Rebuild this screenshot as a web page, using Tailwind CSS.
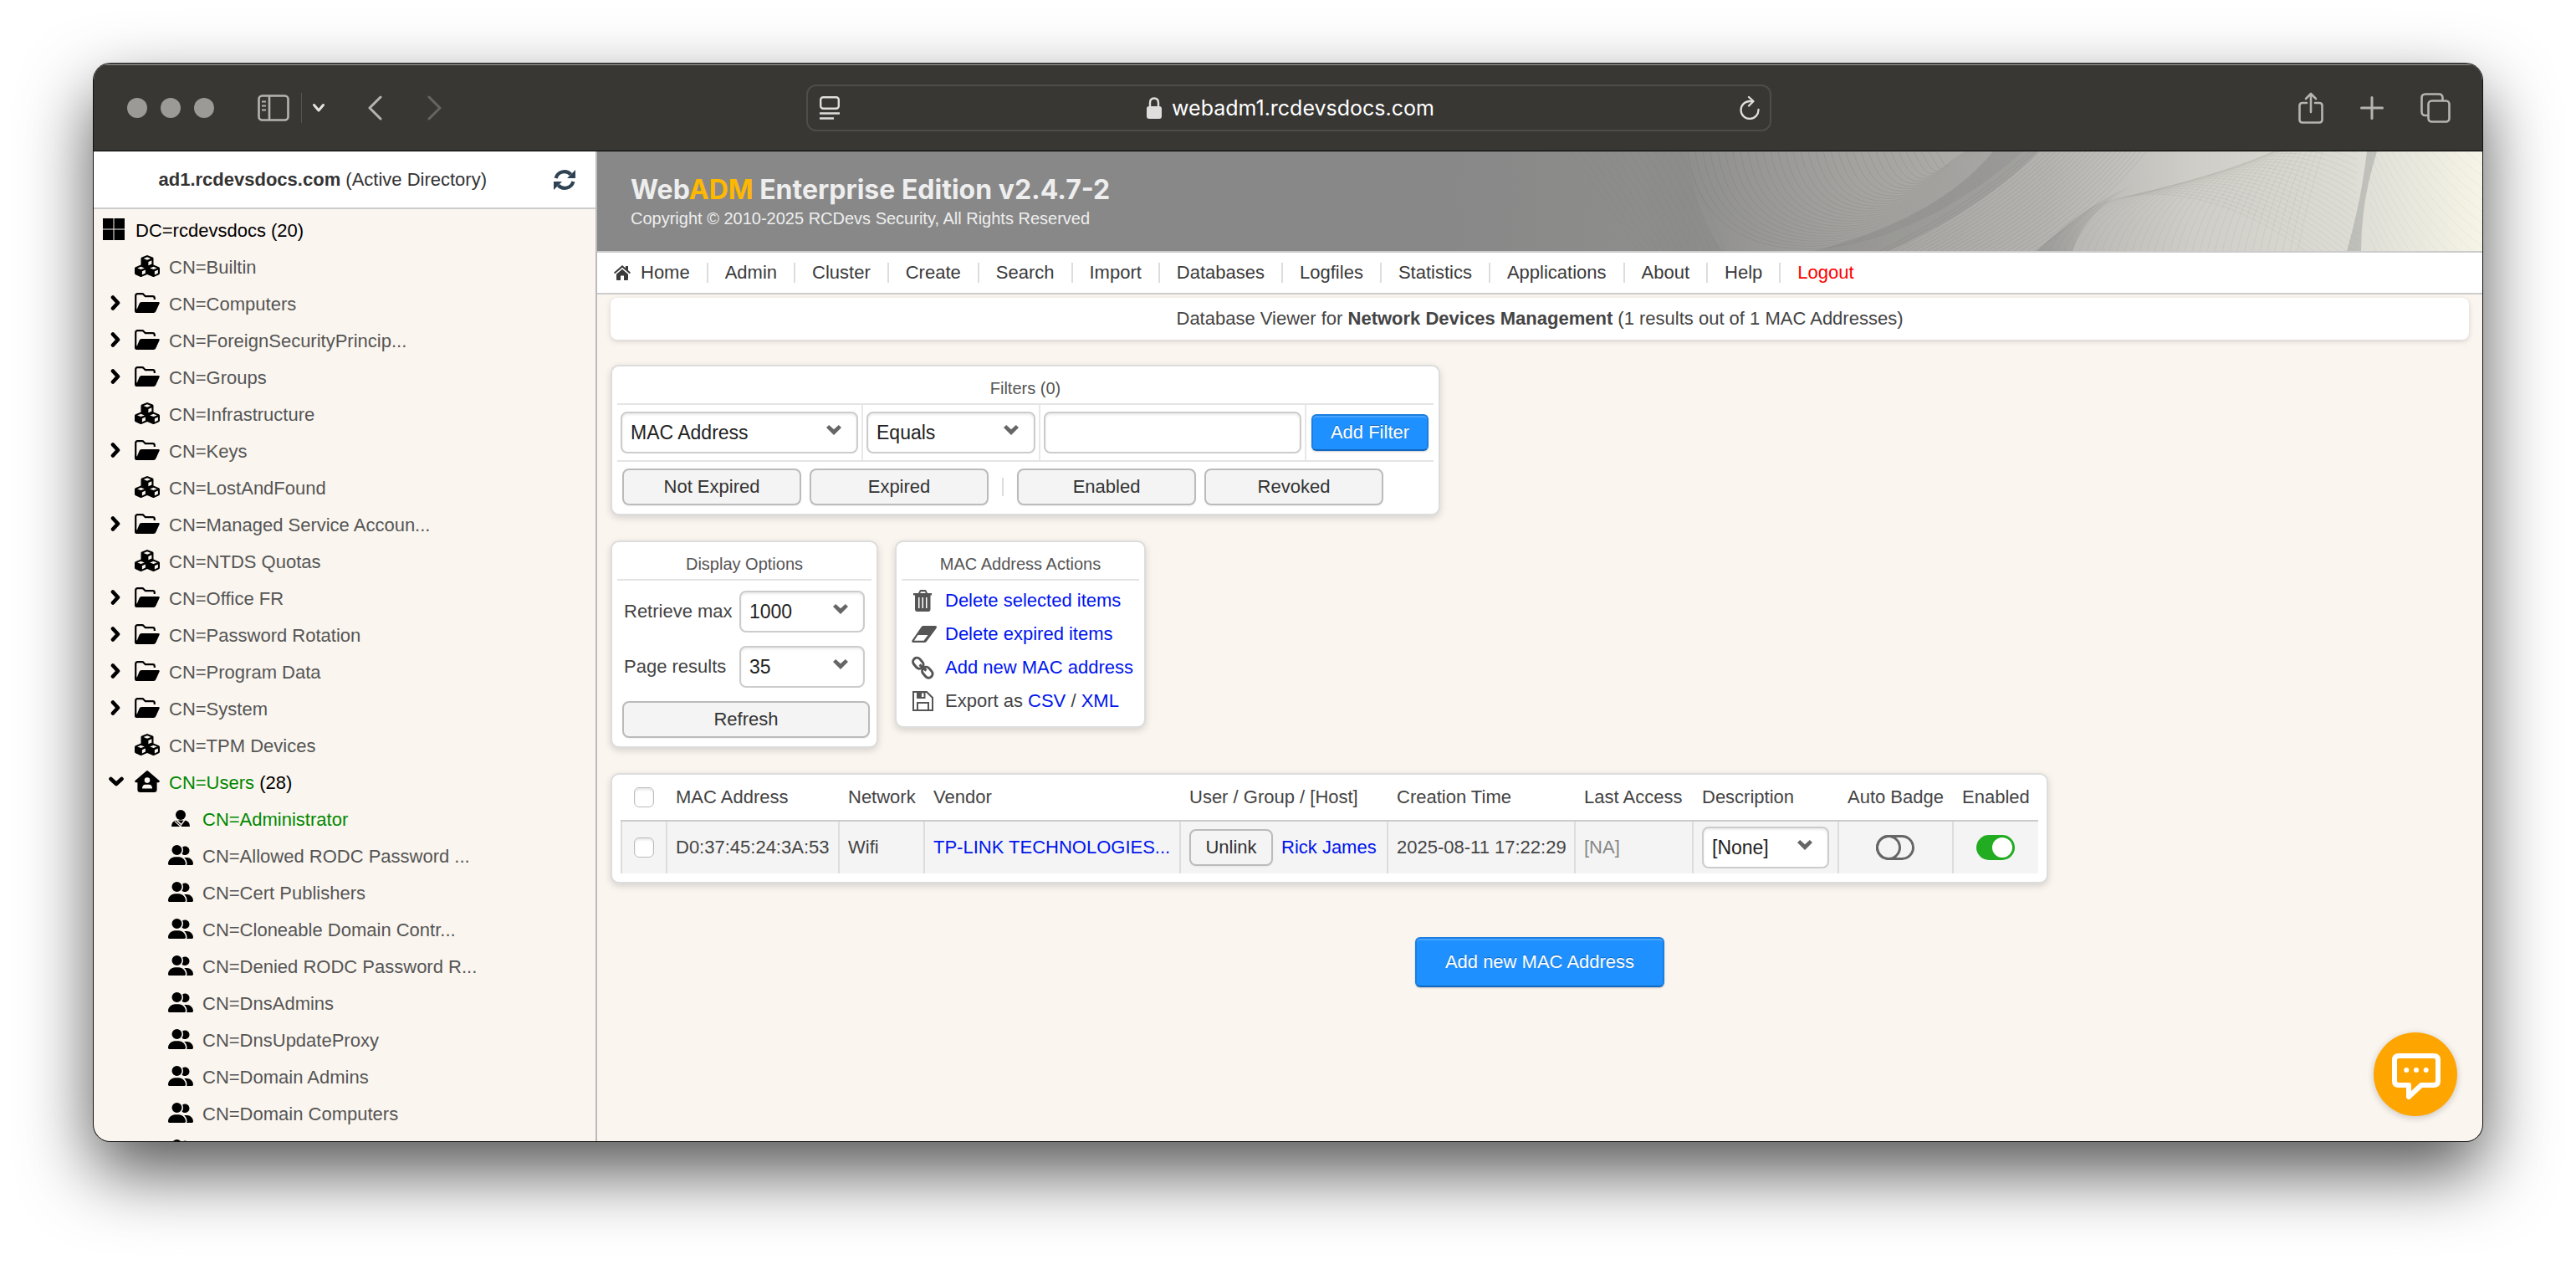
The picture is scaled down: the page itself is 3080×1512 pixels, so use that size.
<!DOCTYPE html>
<html lang="en">
<head>
  <meta charset="UTF-8" />
  <meta name="viewport" content="width=device-width, initial-scale=1.0"/>
  <title>WebADM - Network Devices Management</title>
  <script src="https://cdn.jsdelivr.net/npm/@tailwindcss/browser@4"></script>
</head>
<body class="bg-white font-['Liberation_Sans',Arial,sans-serif] text-[22px] leading-7 text-[#444]">

  <!-- Icons -->
  <svg class="hidden">
    <symbol id="i-group" viewBox="0 0 640 512"><path d="M96 128a128 128 0 1 1 256 0A128 128 0 1 1 96 128zM0 482.3C0 383.8 79.8 304 178.3 304l91.4 0C368.2 304 448 383.8 448 482.3c0 16.400-13.300 29.700-29.700 29.700L29.700 512C13.300 512 0 498.700 0 482.300zM609.300 512l-137.800 0c5.400-9.400 8.600-20.300 8.600-32l0-8c0-60.700-27.100-115.200-69.800-151.800c2.400-.1 4.700-.2 7.100-.2l61.400 0C567.800 320 640 392.200 640 481.300c0 17-13.800 30.700-30.700 30.700zM432 256c-31 0-59-12.600-79.300-32.900C372.400 196.500 384 163.600 384 128c0-26.800-6.600-52.100-18.300-74.300C384.300 40.100 407.200 32 432 32c61.900 0 112 50.100 112 112s-50.100 112-112 112z"/></symbol>
    <symbol id="i-folder" viewBox="0 0 30 24">
      <path d="M1.200 21V3.500Q1.200 1.200 3.500 1.200H9Q10 1.200 10.700 2L12.800 4.200H21.500Q23.800 4.200 23.800 6.500V8" fill="none" stroke="currentColor" stroke-width="2.200"/>
      <path d="M8.200 11H28.500Q30.300 11 29.600 12.700L25.400 22Q24.600 24 22.600 24H2.600Q1 24 1.700 22.200L5.600 12.700Q6.300 11 8.200 11Z"/>
      <path d="M0 18V22Q0 24 2.600 24L3.500 20Z"/>
    </symbol>
    <symbol id="i-cubes" viewBox="0 0 30 26">
      <path d="M15 0L21.500 2.600Q22.500 3 22.500 4.100V11.600L29 14.200Q30 14.700 30 15.800V21.600Q30 22.700 29 23.200L23.500 25.800Q22.500 26.200 21.500 25.800L15 22.900L8.500 25.800Q7.500 26.200 6.500 25.800L1 23.200Q0 22.700 0 21.600V15.800Q0 14.700 1 14.200L7.500 11.600V4.100Q7.500 3 8.500 2.600Z"/>
      <g fill="#faf5ef">
        <path d="M15 2.300L19.300 4L15 5.700L10.700 4Z"/><path d="M16.400 7.900L20.400 6.200V10.600L16.400 12.300Z"/>
        <path d="M7.500 13.700L11.800 15.400L7.500 17.100L3.200 15.400Z"/><path d="M8.900 19.300L12.900 17.600V21.600L8.900 23.400Z"/>
        <path d="M22.500 13.700L26.800 15.400L22.500 17.100L18.200 15.400Z"/><path d="M23.900 19.300L27.900 17.600V21.600L23.900 23.400Z"/>
      </g>
    </symbol>
    <symbol id="i-house-user" viewBox="0 0 30 26">
      <path d="M14 .5Q15 -.3 16 .5L29.400 12Q30.600 13.600 28.600 14.200H26.600V22.800Q26.600 26 23.400 26H6.600Q3.400 26 3.400 22.800V14.200H1.400Q-.6 13.600 .6 12Z"/>
      <circle cx="15" cy="11.600" r="3.300" fill="#faf5ef"/><path d="M9 21.600Q9 16.800 13 16.800H17Q21 16.800 21 21.600Z" fill="#faf5ef"/>
    </symbol>
    <symbol id="i-admin" viewBox="0 0 22 20">
      <circle cx="11" cy="6" r="6"/><path d="M0 20Q0 14 5.500 12.600L11 18L9.800 20ZM22 20Q22 14 16.500 12.600L11.500 19L12 20ZM7.500 12.500H14.500L11.800 16.500Z"/>
      <path d="M4 13.500L11 20" stroke="#faf5ef" stroke-width="1.200"/>
    </symbol>
    <symbol id="i-win" viewBox="0 0 26 26"><path d="M0 0H12.500V12.500H0ZM13.500 0H26V12.500H13.500ZM0 13.500H12.500V26H0ZM13.500 13.500H26V26H13.500Z"/></symbol>
    <symbol id="i-right" viewBox="0 0 16 18"><path d="M5 2.500L11 9L5 15.500" fill="none" stroke="currentColor" stroke-width="4.600" stroke-linejoin="round" stroke-linecap="round"/></symbol>
    <symbol id="i-down" viewBox="0 0 18 18"><path d="M2.500 6L9 12L15.500 6" fill="none" stroke="currentColor" stroke-width="4.600" stroke-linejoin="round" stroke-linecap="round"/></symbol>
    <symbol id="i-arrow" viewBox="0 0 18 12"><path d="M0 3L3.200 0L9 5.200L14.800 0L18 3L9 12Z"/></symbol>
  </svg>

  <div class="flex h-screen min-h-[700px] px-28 pt-19 pb-37">
    <div class="relative flex min-w-0 flex-1 flex-col overflow-hidden rounded-[20px] bg-[#faf5ef] shadow-[0_0_0_1px_#111,0_36px_84px_rgba(0,0,0,0.68)]">

      <!-- Browser toolbar -->
      <div class="flex h-[105px] shrink-0 items-center border-t-2 border-b border-t-[#7b7a76] border-b-black bg-[#383734] pr-[38px] pl-10 text-[#b5b4b1]">
        <div class="flex flex-1 items-center">
          <div class="flex gap-4">
            <span class="size-6 rounded-full bg-[#9b9a97]"></span>
            <span class="size-6 rounded-full bg-[#9b9a97]"></span>
            <span class="size-6 rounded-full bg-[#9b9a97]"></span>
          </div>
          <button class="ml-13" aria-label="Sidebar"><svg class="h-8 w-[38px]" viewBox="0 0 38 32" fill="none" stroke="currentColor" stroke-width="2.600"><rect x="1.500" y="1.500" width="35" height="29" rx="4"/><path d="M14 2V30"/><path d="M5 8.500H10M5 13.500H10M5 18.500H10" stroke-width="2"/></svg></button>
          <span class="ml-[14px] h-9 w-px bg-[#55544f]"></span>
          <button class="ml-3" aria-label="Tab groups"><svg class="h-3 w-4" viewBox="0 0 16 12" fill="none" stroke="#e4e3e0" stroke-width="3" stroke-linecap="round" stroke-linejoin="round"><path d="M2.500 2.500L8 9L13.500 2.500"/></svg></button>
          <button class="ml-[50px]" aria-label="Back"><svg class="h-[30px] w-[18px]" viewBox="0 0 18 30" fill="none" stroke="currentColor" stroke-width="3" stroke-linecap="round" stroke-linejoin="round"><path d="M16 2L3 15L16 28"/></svg></button>
          <button class="ml-[54px] text-[#666561]" aria-label="Forward"><svg class="h-[30px] w-[18px]" viewBox="0 0 18 30" fill="none" stroke="currentColor" stroke-width="3" stroke-linecap="round" stroke-linejoin="round"><path d="M2 2L15 15L2 28"/></svg></button>
        </div>
        <div class="flex h-14 w-5/12 max-w-[1154px] items-center justify-between rounded-xl border-2 border-[#4e4d4a] px-3 text-[#dfdedc]">
          <svg class="h-7 w-7" viewBox="0 0 28 28" fill="none" stroke="currentColor" stroke-width="2.400"><rect x="3.200" y="1.200" width="21.600" height="13.600" rx="3"/><path d="M2 20.500H26M2 26.500H19"/></svg>
          <div class="flex items-center gap-3 font-[Inter,'Liberation_Sans',sans-serif] text-[25px] text-white">
            <svg class="h-[26px] w-[18px]" viewBox="0 0 18 26"><path d="M4 12V7Q4 1.500 9 1.500T14 7V12" fill="none" stroke="#dfdedc" stroke-width="2.400"/><rect y="11" width="18" height="15" rx="3" fill="#dfdedc"/></svg>
            webadm1.rcdevsdocs.com
          </div>
          <button aria-label="Reload"><svg class="h-7 w-6" viewBox="0 0 24 28" fill="none" stroke="currentColor" stroke-width="2.300" stroke-linecap="round" stroke-linejoin="round"><path d="M22.500 16A10.500 10.500 0 1 1 12 6H16"/><path d="M11 1L16.500 6L11 11.500"/></svg></button>
        </div>
        <div class="flex flex-1 items-center justify-end gap-[44px]">
          <button aria-label="Share"><svg class="h-[38px] w-[30px]" viewBox="0 0 30 38" fill="none" stroke="currentColor" stroke-width="2.600" stroke-linecap="round" stroke-linejoin="round"><path d="M10 13H5Q1.500 13 1.500 16V33Q1.500 36.500 5 36.500H25Q28.500 36.500 28.500 33V16Q28.500 13 25 13H20"/><path d="M15 24V2M9 8L15 2L21 8"/></svg></button>
          <button aria-label="New tab"><svg class="size-7" viewBox="0 0 28 28" fill="none" stroke="currentColor" stroke-width="3" stroke-linecap="round"><path d="M14 1.500V26.500M1.500 14H26.500"/></svg></button>
          <button aria-label="Tabs"><svg class="size-9" viewBox="0 0 36 36" fill="none" stroke="currentColor" stroke-width="2.600"><rect x="9.500" y="9.500" width="25" height="25" rx="4"/><path d="M9.500 27H6Q1.500 27 1.500 22.500V6Q1.500 1.500 6 1.500H22Q26.500 1.500 26.500 6V9.500"/></svg></button>
        </div>
      </div>

      <div class="flex min-h-0 flex-1">

        <!-- LDAP tree -->
        <aside class="flex w-[602px] shrink-0 flex-col overflow-hidden border-r-2 border-[#bbb]">
          <div class="flex h-[69px] shrink-0 items-center justify-end gap-20 border-b-2 border-[#ccc] bg-white pr-6 text-[#333]">
            <p><b>ad1.rcdevsdocs.com</b> (Active Directory)</p>
            <button aria-label="Refresh tree"><svg class="size-[26px]" viewBox="0 0 26 26" fill="none" stroke="#2f4254" stroke-width="4.200"><path d="M2.600 11A10.600 10.600 0 0 1 20.500 6.500"/><path d="M23.400 15A10.600 10.600 0 0 1 5.500 19.500"/><path d="M26 1V11H16ZM0 25V15H10Z" fill="#2f4254" stroke="none"/></svg></button>
          </div>
          <ul id="tree" class="pt-1"></ul>
        </aside>

        <main class="flex min-w-0 flex-1 flex-col">

          <!-- Banner -->
          <header class="flex h-[121px] shrink-0 items-stretch justify-between overflow-hidden border-b-2 border-[#ccc] bg-[#888] pl-10 text-[#eee]">
            <div class="pt-[30px] whitespace-nowrap">
              <h1 class="font-[Inter,'Liberation_Sans',sans-serif] text-[32px] leading-8 font-bold">Web<span class="text-[#ffb800]">ADM</span> Enterprise Edition v2.4.7-2</h1>
              <p class="pt-1 text-[20px] leading-7">Copyright © 2010-2025 RCDevs Security, All Rights Reserved</p>
            </div>
            <svg class="h-[119px] w-[1240px] shrink-0" viewBox="0 0 1240 119" preserveAspectRatio="none">
              <defs>
                <linearGradient id="sky">
                  <stop offset="0" stop-color="#888"/><stop offset=".23" stop-color="#8e8e8d"/><stop offset=".4" stop-color="#a4a3a0"/>
                  <stop offset=".58" stop-color="#b4b3b0"/><stop offset=".72" stop-color="#cecdc7"/><stop offset=".87" stop-color="#dcdcd5"/><stop offset="1" stop-color="#f6f4e6"/>
                </linearGradient>
                <linearGradient id="fold"><stop offset="0" stop-color="#777" stop-opacity="0"/><stop offset="1" stop-color="#777" stop-opacity=".35"/></linearGradient>
                <linearGradient id="lift"><stop offset="0" stop-color="#777" stop-opacity=".4"/><stop offset="1" stop-color="#777" stop-opacity="0"/></linearGradient>
              </defs>
              <rect width="1240" height="119" fill="url(#sky)"/>
              <path d="M230 0H288Q300 80 332 119H230Z" fill="url(#fold)" opacity=".5"/>
              <path d="M655 0H710Q640 70 530 119H440Q590 80 655 0Z" fill="#7c7b79" opacity=".3"/>
              <path d="M831 36Q770 60 707 119H750Q765 70 831 36Z" fill="url(#lift)"/>
              <path d="M1102 0H1114Q1095 60 1095 119H1078Q1095 60 1102 0Z" fill="#888" opacity=".35"/>
              <g id="waves" fill="none" stroke="#6b6b69" stroke-width="1"></g>
            </svg>
          </header>

          <!-- Menu -->
          <nav class="flex h-[50px] shrink-0 items-center border-b-2 border-[#ccc] bg-white pl-5 text-[#3a3a3a]">
            <svg class="h-[18px] w-5" viewBox="0 0 20 18" fill="#3a3a3a"><path d="M10 4.800L17 10.800V17Q17 18 16 18H12V12.500H8V18H4Q3 18 3 17V10.800Z"/><path d="M10 0L14 3.500V1H17V6L20 8.800L18.800 10.200L10 2.800L1.200 10.200L0 8.800Z"/></svg>
            <ul class="-ml-2 flex leading-6 [&>li]:border-r-2 [&>li]:border-[#ddd] [&>li]:px-5 [&>li:last-child]:border-r-0">
              <li><a href="#">Home</a></li>
              <li><a href="#">Admin</a></li>
              <li><a href="#">Cluster</a></li>
              <li><a href="#">Create</a></li>
              <li><a href="#">Search</a></li>
              <li><a href="#">Import</a></li>
              <li><a href="#">Databases</a></li>
              <li><a href="#">Logfiles</a></li>
              <li><a href="#">Statistics</a></li>
              <li><a href="#">Applications</a></li>
              <li><a href="#">About</a></li>
              <li><a href="#">Help</a></li>
              <li><a href="#" class="text-[#f00]">Logout</a></li>
            </ul>
          </nav>

          <div class="flex flex-col items-start gap-[30px] px-4 pt-1">
            <div class="w-full rounded-lg bg-white py-[11px] text-center shadow-[0_2px_6px_rgba(0,0,0,0.15)]">Database Viewer for <b>Network Devices Management</b> (1 results out of 1 MAC Addresses)</div>

            <!-- Filters -->
            <section class="rounded-[10px] border-2 border-[#ddd] bg-white px-1.5 pb-2.5 shadow-[0_3px_8px_rgba(0,0,0,0.15)]">
              <h2 class="border-b-2 border-[#e4e4e4] pt-3 pb-1 text-center text-[20px] text-[#555]">Filters (0)</h2>
              <div class="flex h-[68px] border-b-2 border-[#e4e4e4]">
                <div class="flex items-center border-r-2 border-[#e8e8e8] px-1">
                  <label class="relative block">
                    <select aria-label="Field" class="h-[50px] w-[284px] appearance-none rounded-lg border-2 border-[#ccc] bg-white pl-2.5 text-[23px] text-[#222] shadow-[inset_0_2px_3px_rgba(0,0,0,0.08)]"><option>MAC Address</option></select>
                    <svg class="pointer-events-none absolute top-4 right-5 h-3 w-[18px] fill-[#666]"><use href="#i-arrow"/></svg>
                  </label>
                </div>
                <div class="flex items-center border-r-2 border-[#e8e8e8] px-1">
                  <label class="relative block">
                    <select aria-label="Operator" class="h-[50px] w-[202px] appearance-none rounded-lg border-2 border-[#ccc] bg-white pl-2.5 text-[23px] text-[#222] shadow-[inset_0_2px_3px_rgba(0,0,0,0.08)]"><option>Equals</option></select>
                    <svg class="pointer-events-none absolute top-4 right-5 h-3 w-[18px] fill-[#666]"><use href="#i-arrow"/></svg>
                  </label>
                </div>
                <div class="flex items-center border-r-2 border-[#e8e8e8] px-1">
                  <input type="text" aria-label="Value" class="h-[50px] w-[308px] rounded-lg border-2 border-[#ccc] px-2.5 shadow-[inset_0_2px_3px_rgba(0,0,0,0.08)]">
                </div>
                <div class="flex items-center px-1.5">
                  <button class="h-11 w-[140px] rounded-md border-2 border-[#1a7fe0] border-b-[#1068c0] bg-[#1e90ff] text-white shadow-[inset_0_2px_0_#48a5ff,0_1px_2px_rgba(0,0,0,0.2)] [text-shadow:0_-1px_0_rgba(0,0,0,0.3)]">Add Filter</button>
                </div>
              </div>
              <div class="flex items-center gap-2.5 px-1.5 pt-2">
                <button class="h-11 w-[214px] rounded-lg border-2 border-[#bbb] bg-[#f4f4f4] text-[#333] shadow-xs">Not Expired</button>
                <button class="h-11 w-[214px] rounded-lg border-2 border-[#bbb] bg-[#f4f4f4] text-[#333] shadow-xs">Expired</button>
                <span class="mx-1.5 h-[22px] w-0.5 bg-[#ddd]"></span>
                <button class="h-11 w-[214px] rounded-lg border-2 border-[#bbb] bg-[#f4f4f4] text-[#333] shadow-xs">Enabled</button>
                <button class="h-11 w-[214px] rounded-lg border-2 border-[#bbb] bg-[#f4f4f4] text-[#333] shadow-xs">Revoked</button>
              </div>
            </section>

            <div class="flex items-start gap-5">
              <!-- Display options -->
              <section class="w-[320px] rounded-[10px] border-2 border-[#ddd] bg-white px-1.5 pb-2.5 shadow-[0_3px_8px_rgba(0,0,0,0.15)]">
                <h2 class="border-b-2 border-[#e4e4e4] pt-3 pb-1 text-center text-[20px] text-[#555]">Display Options</h2>
                <div class="flex flex-col gap-4 pt-3 pr-0.5 pl-1.5">
                  <div class="flex items-center justify-between pr-1.5 pl-0.5">
                    <label for="max">Retrieve max</label>
                    <div class="relative">
                      <select id="max" class="block h-[50px] w-[150px] appearance-none rounded-lg border-2 border-[#ccc] bg-white pl-2.5 text-[23px] text-[#222] shadow-[inset_0_2px_3px_rgba(0,0,0,0.08)]"><option>1000</option></select>
                      <svg class="pointer-events-none absolute top-4 right-5 h-3 w-[18px] fill-[#666]"><use href="#i-arrow"/></svg>
                    </div>
                  </div>
                  <div class="flex items-center justify-between pr-1.5 pl-0.5">
                    <label for="page">Page results</label>
                    <div class="relative">
                      <select id="page" class="block h-[50px] w-[150px] appearance-none rounded-lg border-2 border-[#ccc] bg-white pl-2.5 text-[23px] text-[#222] shadow-[inset_0_2px_3px_rgba(0,0,0,0.08)]"><option>35</option></select>
                      <svg class="pointer-events-none absolute top-4 right-5 h-3 w-[18px] fill-[#666]"><use href="#i-arrow"/></svg>
                    </div>
                  </div>
                  <button class="h-11 rounded-lg border-2 border-[#bbb] bg-[#f4f4f4] text-[#333] shadow-xs">Refresh</button>
                </div>
              </section>

              <!-- Actions -->
              <section class="w-[300px] rounded-[10px] border-2 border-[#ddd] bg-white px-1.5 pb-2.5 shadow-[0_3px_8px_rgba(0,0,0,0.15)]">
                <h2 class="border-b-2 border-[#e4e4e4] pt-3 pb-1 text-center text-[20px] text-[#555]">MAC Address Actions</h2>
                <ul class="pt-1 pl-3 whitespace-nowrap [&>li]:flex [&>li]:h-10 [&>li]:items-center [&>li]:gap-2.5">
                  <li>
                    <svg class="h-[26px] w-[30px] fill-[#555]" viewBox="0 0 30 26"><path d="M2 4H8L9.500 1Q10 0 11 0H16Q17 0 17.500 1L19 4H24V6.500H2ZM11 2.200L10.200 4H16.800L16 2.200Z" fill-rule="evenodd"/><path fill-rule="evenodd" d="M4 6H22.500V23Q22.500 26 20 26H6.500Q4 26 4 23ZM8 9V22H9.500V9ZM12.500 9V22H14V9ZM17 9V22H18.500V9Z"/></svg>
                    <a href="#" class="text-[#0014ee]">Delete selected items</a>
                  </li>
                  <li>
                    <svg class="h-[22px] w-[30px] fill-[#555]" viewBox="0 0 30 22"><path fill-rule="evenodd" d="M13.500 1H28Q31 1 29.500 4L18 19.500Q17 21 15 21H2Q-.8 21 .8 18L11.500 2.500Q12.300 1 13.500 1ZM7.500 12L3 18.800H14.500L19.500 12Z"/></svg>
                    <a href="#" class="text-[#0014ee]">Delete expired items</a>
                  </li>
                  <li>
                    <svg class="h-[28px] w-[30px]" viewBox="0 0 30 28" fill="none" stroke="#555" stroke-width="3"><rect x="1" y="4" width="14" height="9.500" rx="4.700" transform="rotate(50 8 8.500)"/><rect x="12" y="15" width="14" height="9.500" rx="4.700" transform="rotate(50 19 19.500)"/><path d="M9.500 10.500L17.500 17.500"/></svg>
                    <a href="#" class="text-[#0014ee]">Add new MAC address</a>
                  </li>
                  <li>
                    <svg class="h-[24px] w-[30px]" viewBox="0 0 30 24" fill="none" stroke="#555" stroke-width="2"><path d="M2 1H18L25 8V23H2Z"/><path d="M7 23V14H20V23"/><path d="M6 1H16.500V9H6ZM12 2.500V7H14.500V2.500Z" fill="#555" fill-rule="evenodd" stroke="none"/></svg>
                    <span>Export as <a href="#" class="text-[#0014ee]">CSV</a> / <a href="#" class="text-[#0014ee]">XML</a></span>
                  </li>
                </ul>
              </section>
            </div>

            <!-- Results -->
            <section class="rounded-[10px] border-2 border-[#ddd] bg-white px-2.5 pb-2.5 shadow-[0_3px_8px_rgba(0,0,0,0.15)]">
              <table class="table-fixed border-separate border-spacing-0 text-left whitespace-nowrap">
                <colgroup>
                  <col class="w-[54px]"><col class="w-[206px]"><col class="w-[102px]"><col class="w-[306px]"><col class="w-[248px]"><col class="w-[224px]"><col class="w-[141px]"><col class="w-[174px]"><col class="w-[137px]"><col class="w-[103px]">
                </colgroup>
                <thead>
                  <tr class="h-14 [&>th]:border-b-2 [&>th]:border-[#ccc] [&>th]:p-0 [&>th]:pl-3 [&>th]:font-normal">
                    <th><input type="checkbox" aria-label="Select all" class="ml-1 block size-6 appearance-none rounded-md border border-[#bbb] bg-white shadow-[inset_0_2px_3px_rgba(0,0,0,0.1)]"></th>
                    <th>MAC Address</th>
                    <th>Network</th>
                    <th>Vendor</th>
                    <th>User / Group / [Host]</th>
                    <th>Creation Time</th>
                    <th>Last Access</th>
                    <th>Description</th>
                    <th>Auto Badge</th>
                    <th>Enabled</th>
                  </tr>
                </thead>
                <tbody>
                  <tr class="h-[62px] bg-[#f4f4f4] [&>td]:border-l-2 [&>td]:border-[#ddd] [&>td]:p-0 [&>td]:pl-2.5">
                    <td><input type="checkbox" aria-label="Select D0:37:45:24:3A:53" class="ml-1 block size-6 appearance-none rounded-md border border-[#bbb] bg-white shadow-[inset_0_2px_3px_rgba(0,0,0,0.1)]"></td>
                    <td>D0:37:45:24:3A:53</td>
                    <td>Wifi</td>
                    <td><a href="#" class="text-[#0014ee]">TP-LINK TECHNOLOGIES...</a></td>
                    <td>
                      <div class="flex items-center gap-2.5">
                        <button class="h-11 w-[100px] rounded-lg border-2 border-[#bbb] bg-[#f4f4f4] text-[#333] shadow-xs">Unlink</button>
                        <a href="#" class="text-[#0014ee]">Rick James</a>
                      </div>
                    </td>
                    <td>2025-08-11 17:22:29</td>
                    <td class="text-[#888]">[NA]</td>
                    <td>
                      <div class="relative w-[152px]">
                        <select aria-label="Description" class="block h-[50px] w-full appearance-none rounded-lg border-2 border-[#ccc] bg-white pl-2.5 text-[23px] text-[#222] shadow-[inset_0_2px_3px_rgba(0,0,0,0.08)]"><option>[None]</option></select>
                        <svg class="pointer-events-none absolute top-4 right-5 h-3 w-[18px] fill-[#666]"><use href="#i-arrow"/></svg>
                      </div>
                    </td>
                    <td class="pr-3!"><input type="checkbox" aria-label="Auto Badge" class="mx-auto block h-[30px] w-[46px] appearance-none rounded-full border-3 border-[#666] before:-mt-[3px] before:-ml-[3px] before:block before:size-[30px] before:rounded-full before:border-3 before:border-[#666] before:content-['']"></td>
                    <td class="pr-3!"><input type="checkbox" aria-label="Enabled" checked class="mx-auto block h-[30px] w-[46px] appearance-none rounded-full border-3 border-[#22ac22] bg-[#22ac22] before:ml-auto before:block before:size-6 before:rounded-full before:bg-white before:content-['']"></td>
                  </tr>
                </tbody>
              </table>
            </section>
          </div>

          <button class="mx-auto mt-16 h-15 w-[298px] shrink-0 rounded-md border-2 border-[#1a7fe0] border-b-[#1068c0] bg-[#1e90ff] text-white shadow-[inset_0_2px_0_#48a5ff,0_1px_2px_rgba(0,0,0,0.2)] [text-shadow:0_-1px_0_rgba(0,0,0,0.3)]">Add new MAC Address</button>
        </main>
      </div>

      <!-- Chat bubble -->
      <button aria-label="Chat" class="absolute right-[30px] bottom-[30px] size-25 rounded-full bg-[#ffa500] shadow-[0_2px_8px_rgba(0,0,0,0.2)]">
        <svg class="size-25" viewBox="0 0 100 100" fill="none" stroke="#fff" stroke-width="6" stroke-linejoin="round"><path d="M30 28H72Q77 28 77 33V58Q77 63 72 63H57L42 77V63H30Q25 63 25 58V33Q25 28 30 28Z"/><g fill="#fff" stroke="none"><circle cx="39.300" cy="45" r="3"/><circle cx="51" cy="45" r="3"/><circle cx="62.700" cy="45" r="3"/></g></svg>
      </button>
    </div>
  </div>

  <script>
    // === Tree ===
    const nodes = [
      ["cubes", "CN=Builtin"],
      ["folder", "CN=Computers"],
      ["folder", "CN=ForeignSecurityPrincip..."],
      ["folder", "CN=Groups"],
      ["cubes", "CN=Infrastructure"],
      ["folder", "CN=Keys"],
      ["cubes", "CN=LostAndFound"],
      ["folder", "CN=Managed Service Accoun..."],
      ["cubes", "CN=NTDS Quotas"],
      ["folder", "CN=Office FR"],
      ["folder", "CN=Password Rotation"],
      ["folder", "CN=Program Data"],
      ["folder", "CN=System"],
      ["cubes", "CN=TPM Devices"],
    ];
    const users = [
      "CN=Allowed RODC Password ...",
      "CN=Cert Publishers",
      "CN=Cloneable Domain Contr...",
      "CN=Denied RODC Password R...",
      "CN=DnsAdmins",
      "CN=DnsUpdateProxy",
      "CN=Domain Admins",
      "CN=Domain Computers",
      "",
    ];

    const icon = (name, size) => `<svg class="${size} mb-1 fill-black text-black"><use href="#i-${name}"/></svg>`;

    let html = `
      <li class="flex h-11 items-center gap-[13px] pl-[11px] text-black">${icon("win", "size-[26px]")}<a href="#">DC=rcdevsdocs (20)</a></li>`;

    nodes.forEach(([type, name]) => {
      html += `
        <li class="flex h-11 items-center pl-[18px] text-[#555]">
          <span class="w-[31px]">${type === "folder" ? icon("right", "h-[18px] w-4") : ""}</span>
          ${type === "folder" ? icon("folder", "h-6 w-[30px]") : icon("cubes", "h-[26px] w-[30px]")}
          <a href="#" class="ml-[11px]">${name}</a>
        </li>`;
    });

    html += `
      <li class="flex h-11 items-center pl-[18px] text-black">
        <span class="w-[31px]">${icon("down", "size-[18px]")}</span>
        ${icon("house-user", "h-[26px] w-[30px]")}
        <span class="ml-[11px]"><a href="#" class="text-[#008800]">CN=Users</a> (28)</span>
      </li>
      <li class="flex h-11 items-center pl-[93px] text-[#008800]">${icon("admin", "h-5 w-[22px]")}<a href="#" class="ml-[15px]">CN=Administrator</a></li>`;

    users.forEach(name => {
      html += `
        <li class="flex h-11 items-center pl-[89px] text-[#555]">${icon("group", "h-6 w-[30px]")}<a href="#" class="ml-[11px]">${name}</a></li>`;
    });
    document.getElementById("tree").innerHTML = html;

    // === Banner waves ===
    let waves = "";
    const wave = (d, o) => waves += `<path d="${d}" opacity="${o}"/>`;
    for (let i = 0; i < 34; i++) {
      const x = 290 + i * 9;
      wave(`M${x} 0C${x + 20} ${160 - i * 4} ${520 + i * 2} ${150 - i * 4} ${690 - i * 2} 0`, 0.18);
    }
    for (let i = 0; i < 24; i++) wave(`M${700 + i * 6} 0Q${620 + i * 7} 70 ${520 + i * 8} 119`, 0.16);
    for (let i = 0; i < 34; i++) {
      wave(`M${722 + i * 9} 119C${750 + i * 9} ${50 - i * 2} ${900 + i * 5} ${-10 - i} ${1090} ${170 - i * 8}`, 0.09);
    }
    for (let i = 0; i < 24; i++) wave(`M1105 ${i * 14 - 220}Q1160 ${i * 14 - 100} 1240 ${i * 14 - 40}`, 0.06);
    for (let i = 0; i < 14; i++) wave(`M${150 + i * 10} 0Q${200 + i * 9} 70 ${230 + i * 8} 119`, 0.06);
    document.getElementById("waves").innerHTML = waves;
  </script>
</body>
</html>
